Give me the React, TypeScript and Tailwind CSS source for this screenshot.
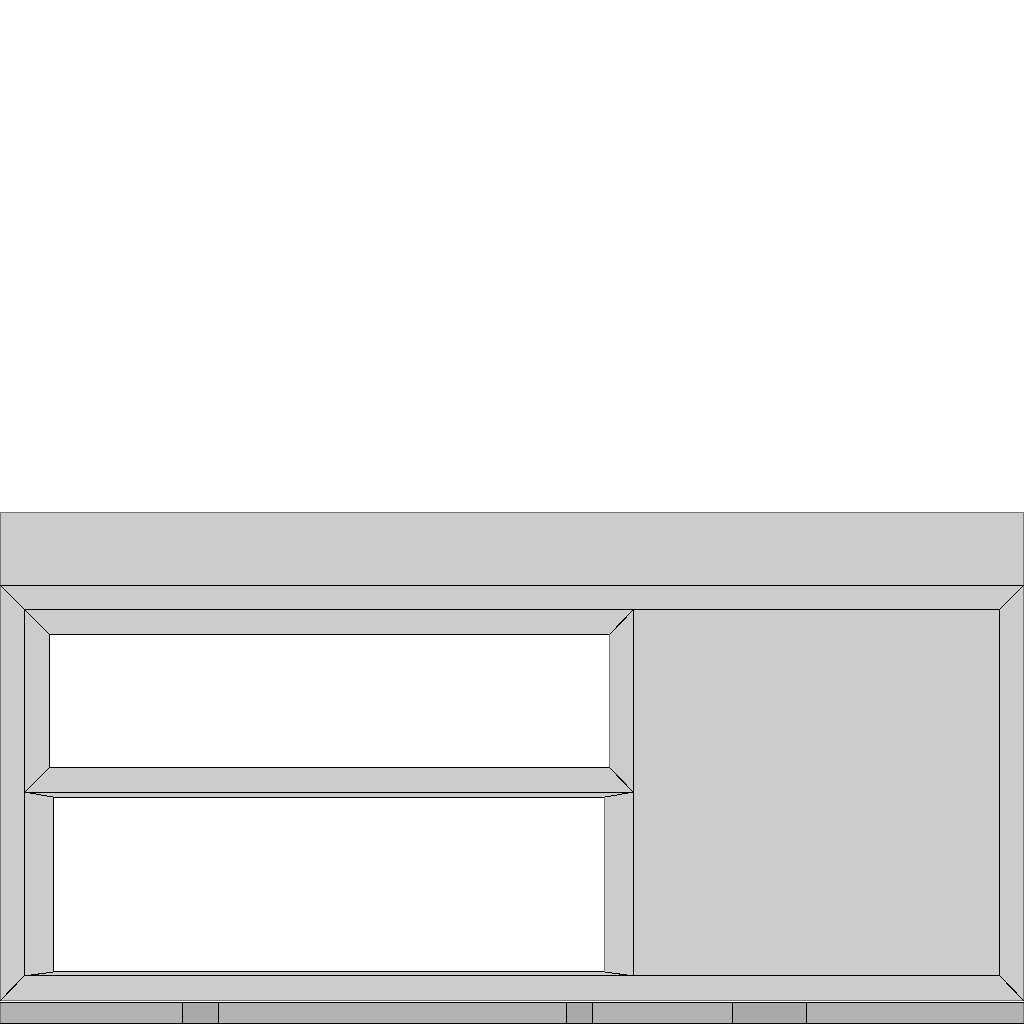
import type { ReactNode } from "react";

type Corner = "tl" | "tr" | "bl" | "br";

const cornerPos: Record<Corner, string> = {
  tl: "top-0 left-0",
  tr: "top-0 right-0",
  bl: "bottom-0 left-0",
  br: "bottom-0 right-0",
};

// bevel mitre line drawn across one corner of a frame
function Diag({ w, h, corner, pos }: { w: number; h: number; corner: Corner; pos?: string }) {
  const [x1, y1, x2, y2] =
    corner === "tl"
      ? [0, 0, w, h]
      : corner === "tr"
        ? [w, 0, 0, h]
        : corner === "bl"
          ? [0, h, w, 0]
          : [w, h, 0, 0];
  return (
    <svg
      className={`pointer-events-none absolute ${pos ?? cornerPos[corner]}`}
      width={w}
      height={h}
      viewBox={`0 0 ${w} ${h}`}
    >
      <line x1={x1} y1={y1} x2={x2} y2={y2} stroke="#000" strokeWidth={1} shapeRendering="crispEdges" />
    </svg>
  );
}

function WhiteBox() {
  return <div className="flex-1 border border-black border-r-[#7a7a7a] bg-white" />;
}

function StatusCell({ className, children }: { className: string; children?: ReactNode }) {
  return <div className={`h-full border-r border-black ${className}`}>{children}</div>;
}

export default function App() {
  return (
    <div className="flex h-[1024px] w-[1024px] flex-col bg-white font-['Liberation_Sans',sans-serif]">
      {/* empty upper area */}
      <div className="h-[512px] shrink-0" />

      {/* toolbar strip */}
      <div className="h-[73px] shrink-0 border-x border-t border-[#777777] bg-[#cccccc]" />

      {/* main bevelled frame */}
      <div className="relative flex h-[416px] shrink-0 bg-[#cccccc] pb-[25px] pl-[24px] pr-[24px] pt-[24px]">
        <span className="pointer-events-none absolute inset-0 border border-[#777777] border-t-black" />
        <Diag w={24} h={24} corner="tl" />
        <Diag w={24} h={24} corner="tr" />
        <Diag w={24} h={25} corner="bl" />
        <Diag w={24} h={25} corner="br" />

        <div className="flex flex-1">
          {/* left column */}
          <div className="flex w-[610px] shrink-0 flex-col">
            {/* upper pane */}
            <div className="relative flex h-[184px] shrink-0 bg-[#cccccc] pb-[25px] pl-[25px] pr-[24px] pt-[25px]">
              <span className="pointer-events-none absolute inset-0 border border-black" />
              <Diag w={25} h={25} corner="tl" />
              <Diag w={24} h={25} corner="tr" />
              <Diag w={25} h={25} corner="bl" />
              <Diag w={24} h={25} corner="br" />
              <WhiteBox />
            </div>

            {/* lower pane */}
            <div className="relative flex flex-1 bg-[#cccccc] pb-[4px] pl-[29px] pr-[29px] pt-[4px]">
              <span className="pointer-events-none absolute inset-0 border-x border-b border-black" />
              <Diag w={29} h={5} corner="tl" pos="-top-px left-0" />
              <Diag w={29} h={5} corner="tr" pos="-top-px right-0" />
              <Diag w={29} h={4} corner="bl" />
              <Diag w={29} h={4} corner="br" />
              <WhiteBox />
            </div>
          </div>

          {/* right panel */}
          <div className="flex-1 border-y border-r border-black bg-[#cccccc]" />
        </div>
      </div>

      {/* status bar */}
      <div className="h-[23px] shrink-0 border-t border-white">
        <div className="flex h-full border-y border-black border-b-black">
          <StatusCell className="w-[183px] border-l border-l-[#777777] bg-[#b3b3b3]" />
          <StatusCell className="w-[36px] bg-[#aaaaaa]" />
          <StatusCell className="w-[348px] bg-[#b3b3b3]" />
          <StatusCell className="w-[26px] bg-[#aaaaaa]" />
          <StatusCell className="w-[140px] bg-[#b3b3b3]" />
          <StatusCell className="w-[74px] bg-[#aaaaaa]" />
          <div className="h-full flex-1 border-r border-[#777777] bg-[#b3b3b3]" />
        </div>
      </div>
    </div>
  );
}
